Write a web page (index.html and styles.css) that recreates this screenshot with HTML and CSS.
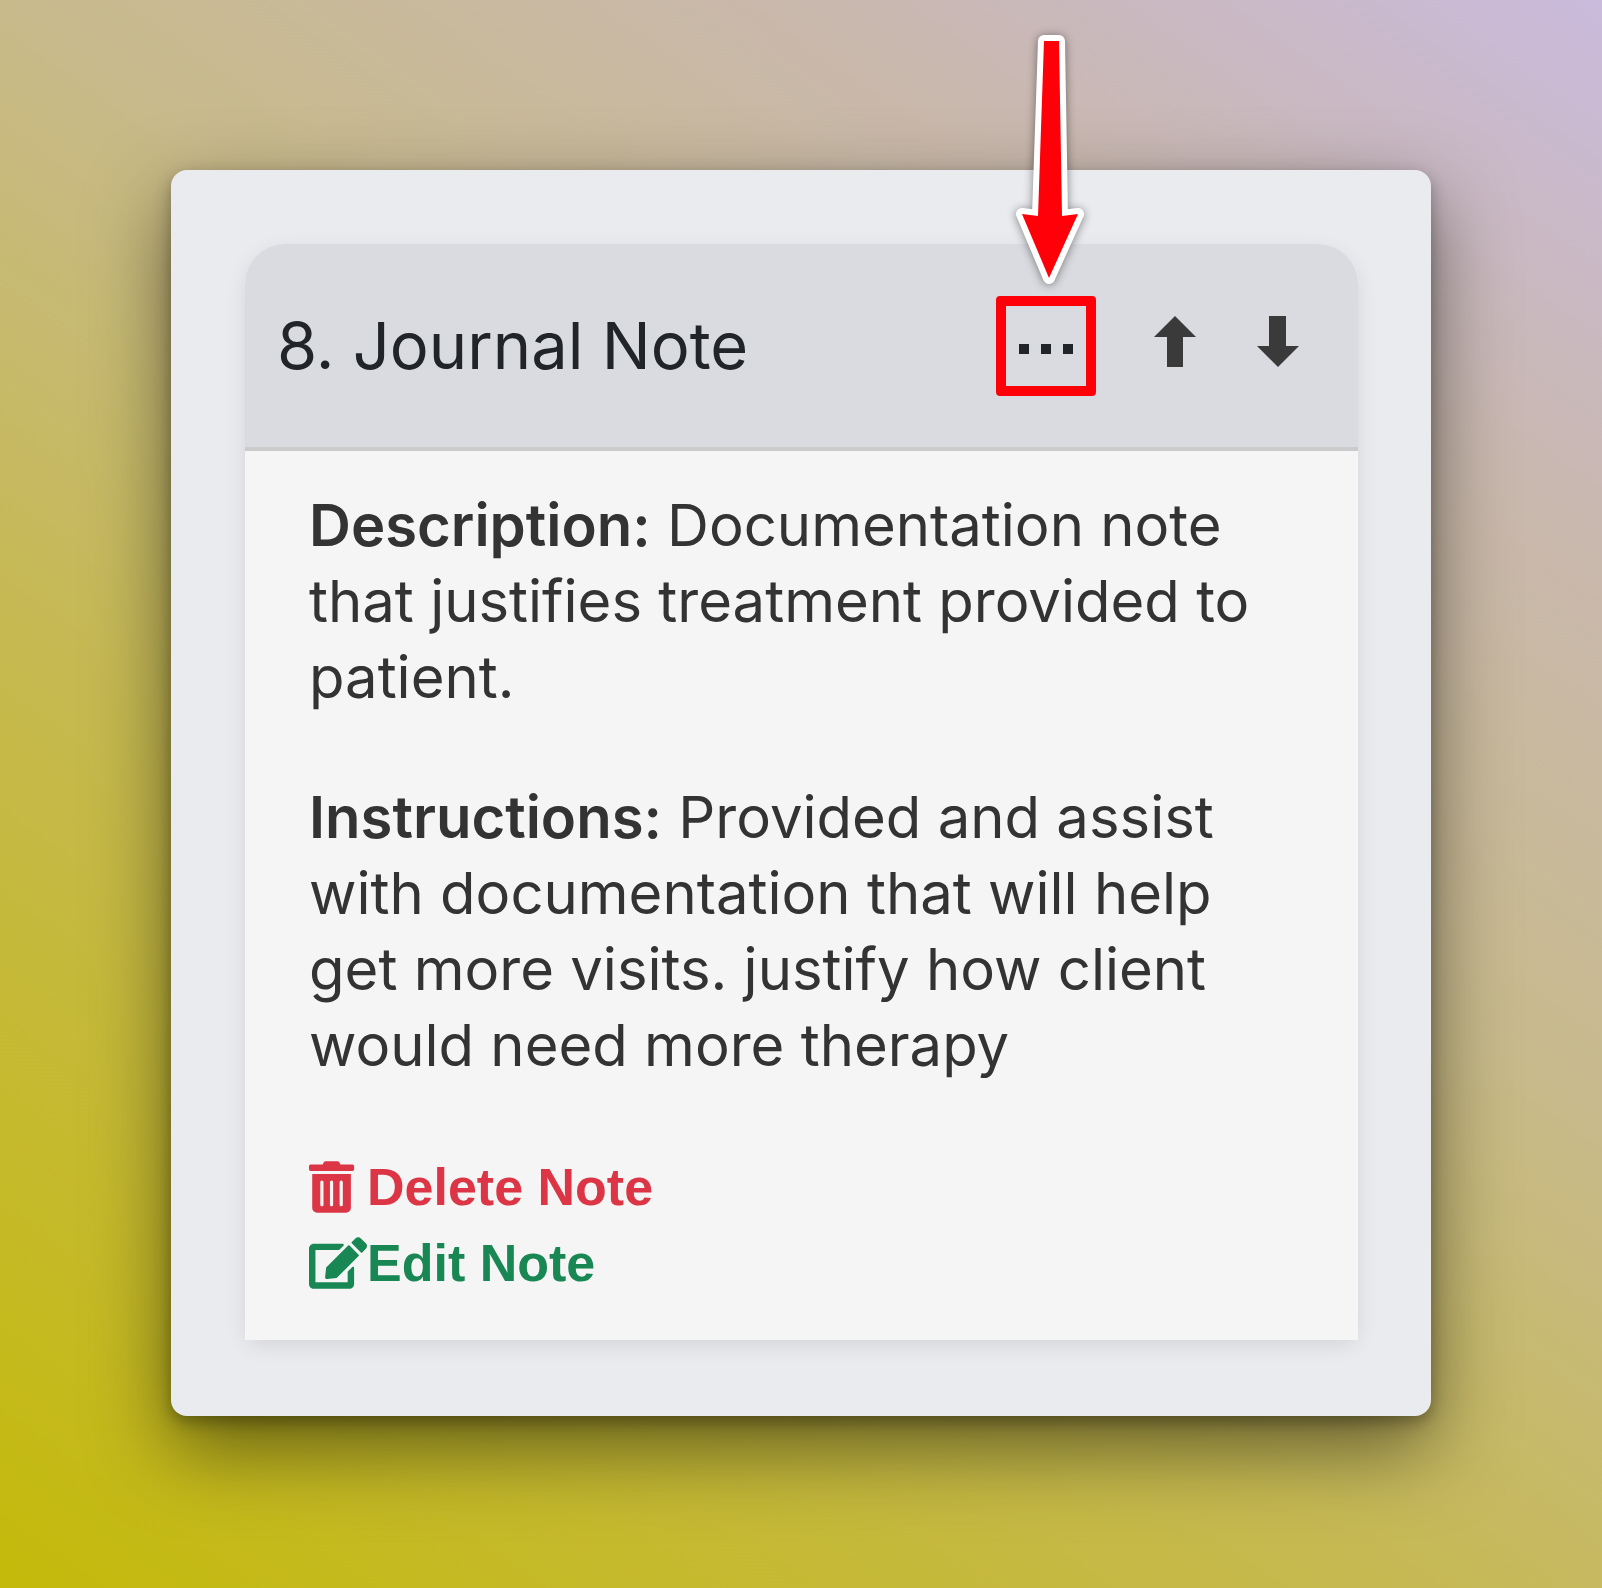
FILE: index.html
```html
<!DOCTYPE html>
<html lang="en">
<head>
<meta charset="utf-8">
<meta name="viewport" content="width=device-width, initial-scale=1">
<title>Journal Note</title>
<link rel="stylesheet" href="styles.css">
</head>
<body>
<main class="panel">
  <article class="note">
    <header class="note-header">
      <h1 class="note-title">8. Journal Note</h1>
      <div class="note-tools">
        <div class="callout">
          <button class="menu-button" type="button" aria-label="More options">
            <svg class="dots" viewBox="0 0 54 10" aria-hidden="true"><path d="M0 0h10v10H0zM22 0h10v10H22zM44 0h10v10H44z"/></svg>
          </button>
          <svg class="pointer" viewBox="0 0 100 277" aria-hidden="true"><path class="pointer-edge" d="M48 22H63L66 197 82 195 53 259 26 195 42 197Z"/><path d="M48 22H63L66 197 82 195 53 259 26 195 42 197Z"/></svg>
        </div>
        <button class="move-button" type="button" aria-label="Move up">
          <svg class="move-icon" viewBox="0 0 44 60" aria-hidden="true"><path d="M21 0L42 21H29V51H13V21H0Z"/></svg>
        </button>
        <button class="move-button" type="button" aria-label="Move down">
          <svg class="move-icon" viewBox="0 0 44 60" aria-hidden="true"><path d="M13 0H30V30H43L22 51 1 30H13Z"/></svg>
        </button>
      </div>
    </header>
    <div class="note-body">
      <p class="note-text"><strong class="label">Description:</strong> Documentation note that justifies treatment provided to patient.</p>
      <p class="note-text"><strong class="label">Instructions:</strong> Provided and assist with documentation that will help get more visits. justify how client would need more therapy</p>
      <div class="actions">
        <button class="action action-delete" type="button">
          <svg class="action-icon" viewBox="0 0 576 512" aria-hidden="true"><path d="M32 464a48 48 0 0 0 48 48h288a48 48 0 0 0 48-48V128H32zm272-256a16 16 0 0 1 32 0v224a16 16 0 0 1-32 0zm-96 0a16 16 0 0 1 32 0v224a16 16 0 0 1-32 0zm-96 0a16 16 0 0 1 32 0v224a16 16 0 0 1-32 0zM432 32H312l-9.400-18.700A24 24 0 0 0 281.100 0H166.800a23.720 23.720 0 0 0-21.400 13.300L136 32H16A16 16 0 0 0 0 48v32a16 16 0 0 0 16 16h416a16 16 0 0 0 16-16V48a16 16 0 0 0-16-16z"/></svg>
          Delete Note
        </button>
        <button class="action action-edit" type="button">
          <svg class="action-icon" viewBox="0 0 576 512" aria-hidden="true"><path d="M402.600 83.200l90.200 90.200c3.800 3.800 3.800 10 0 13.800L274.400 405.600l-92.800 10.300c-12.400 1.400-22.900-9.100-21.500-21.500l10.300-92.800L388.800 83.200c3.800-3.800 10-3.800 13.800 0zm162-22.900l-48.800-48.800c-15.200-15.200-39.900-15.200-55.200 0l-35.400 35.400c-3.800 3.800-3.800 10 0 13.800l90.200 90.200c3.800 3.800 10 3.800 13.800 0l35.400-35.400c15.200-15.300 15.200-40 0-55.200zM384 346.200V448H64V128h229.800c3.200 0 6.200-1.300 8.500-3.500l40-40c7.600-7.600 2.200-20.500-8.500-20.500H48C21.500 64 0 85.500 0 112v352c0 26.500 21.500 48 48 48h352c26.500 0 48-21.500 48-48V306.200c0-10.700-12.900-16-20.500-8.500l-40 40c-2.200 2.300-3.500 5.300-3.500 8.500z"/></svg>
          Edit Note
        </button>
      </div>
    </div>
  </article>
</main>
</body>
</html>
```
FILE: styles.css
```css
* {
  box-sizing: border-box;
}

body {
  margin: 0;
  min-height: 100vh;
  padding: 170px 171px;
  background: linear-gradient(35deg, #c4ba0a 0%, #c6b952 36%, #c8ba8c 59%, #c9b8ae 80%, #cabadc 100%);
  font-family: "Liberation Sans", Arial, sans-serif;
  color: #333;
}

button {
  margin: 0;
  padding: 0;
  border: 0;
  background: none;
  color: inherit;
  font: inherit;
  cursor: pointer;
}

svg {
  display: block;
  fill: currentColor;
}

.panel {
  padding: 74px 73px 76px 74px;
  border-radius: 16px;
  background: #eaebef;
  box-shadow: 0 6px 16px rgba(0, 0, 0, 0.3), 0 32px 80px rgba(0, 0, 0, 0.5);
}

.note {
  border-radius: 40px 40px 0 0;
  background: #f5f5f5;
  box-shadow: 0 6px 24px -4px rgba(0, 0, 0, 0.12);
}

.note-header {
  display: flex;
  align-items: center;
  justify-content: space-between;
  padding: 52px 58px 51px 32px;
  border-bottom: 4px solid #cbcbcd;
  border-radius: 40px 40px 0 0;
  background: #dadbe0;
}

.note-title {
  margin: 0;
  color: #212529;
  font-family: Inter, "Liberation Sans", sans-serif;
  font-size: 65px;
  font-weight: 400;
  line-height: 80px;
}

.note-tools {
  display: flex;
  align-items: center;
  gap: 58px;
}

.callout {
  position: relative;
}

.menu-button {
  display: grid;
  place-items: center;
  width: 100px;
  height: 100px;
  border: 10px solid #ff0008;
  border-radius: 4px;
  color: #212529;
}

.dots {
  width: 54px;
  height: 10px;
  margin-top: 6px;
}

.pointer {
  position: absolute;
  bottom: 100%;
  left: 0;
  width: 100px;
  height: 277px;
  color: #ff0008;
  filter: drop-shadow(0 1px 5px rgba(0, 0, 0, 0.45));
  pointer-events: none;
}

.pointer-edge {
  fill: #fff;
  stroke: #fff;
  stroke-width: 12;
  stroke-linejoin: round;
}

.move-button {
  color: #3a3a3a;
}

.move-icon {
  width: 44px;
  height: 60px;
}

.note-body {
  padding: 36px 64px 39px;
}

.note-text {
  margin: 0 0 64px;
  font-family: Inter, "Liberation Sans", sans-serif;
  font-size: 58px;
  line-height: 76px;
}

.label {
  font-weight: 600;
}

.actions {
  display: flex;
  flex-direction: column;
  align-items: flex-start;
  padding-top: 2px;
}

.action {
  display: flex;
  align-items: center;
  font-size: 52px;
  font-weight: 700;
  line-height: 76px;
}

.action-delete {
  color: #dc3545;
}

.action-edit {
  color: #198754;
}

.action-icon {
  width: 58px;
  height: 52px;
}
```
